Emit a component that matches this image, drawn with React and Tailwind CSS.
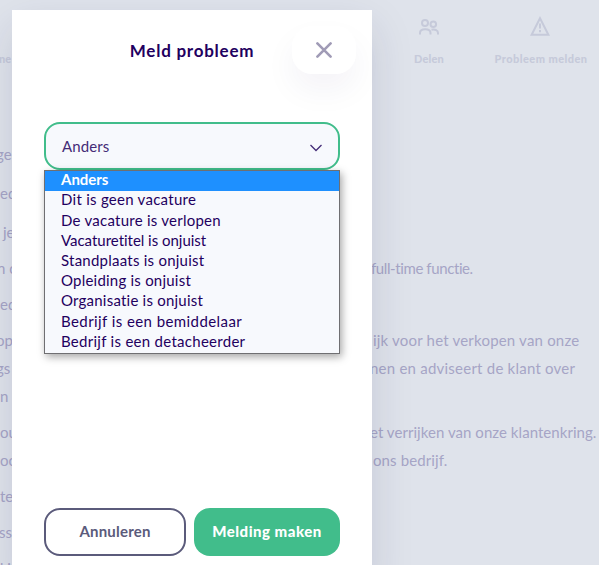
import { clsx } from "clsx";

const options = [
  { label: "Anders", tracking: "font-bold tracking-[-0.02px]" },
  { label: "Dit is geen vacature", tracking: "tracking-[0.27px]" },
  { label: "De vacature is verlopen", tracking: "tracking-[0.25px]" },
  { label: "Vacaturetitel is onjuist", tracking: "tracking-[-0.02px]" },
  { label: "Standplaats is onjuist", tracking: "tracking-[0.24px]" },
  { label: "Opleiding is onjuist", tracking: "tracking-[0.22px]" },
  { label: "Organisatie is onjuist", tracking: "tracking-[0.22px]" },
  { label: "Bedrijf is een bemiddelaar", tracking: "tracking-[0.42px]" },
  { label: "Bedrijf is een detacheerder", tracking: "tracking-[0.28px]" },
];

const lines = [
  { left: "ge", shift: "-ml-[4px]", gap: "mb-[11px]" },
  { left: "ed", shift: "ml-0", gap: "mb-[11px]" },
  { left: "je", shift: "ml-[3px]", gap: "mb-2" },
  { left: "n o", shift: "-ml-[3px]", right: "full-time functie.", rightShift: "-ml-px", tracking: "tracking-[-0.4px]", gap: "mb-2" },
  { left: "ed", shift: "ml-0", gap: "mb-2" },
  { left: "op", shift: "-ml-[4px]", right: "ijk voor het verkopen van onze", rightShift: "ml-px", tracking: "tracking-[0.2px]" },
  { left: "gs", shift: "-ml-[4px]", right: "nen en adviseert de klant over", rightShift: "-ml-[2px]", tracking: "tracking-[0.23px]" },
  { left: "en", shift: "-ml-[8px]", gap: "mb-2" },
  { left: "ou", shift: "", right: "et verrijken van onze klantenkring.", rightShift: "-ml-[2px]", tracking: "tracking-[0.05px]" },
  { left: "oo", shift: "", right: "ons bedrijf.", rightShift: "ml-px", tracking: "tracking-[0.12px]", gap: "mb-2" },
  { left: "te", shift: "", gap: "mb-2" },
  { left: "ss", shift: "-ml-px", gap: "mb-2" },
  { left: "d i", shift: "-ml-[5px]" },
];

function ShareIcon() {
  return (
    <svg width="20" height="16" viewBox="0 0 20 16" fill="none" stroke="currentColor" strokeWidth="2" className="block">
      <circle cx="6" cy="4" r="3" />
      <circle cx="14.3" cy="5.2" r="2.8" />
      <path d="M1 15.500v-1.600C1 11.500 3 10.300 6.200 10.300s5.300 1.200 5.300 3.600v1.600M12.500 10.700c3.800-.8 6.500.6 6.500 3.300v1.500" />
    </svg>
  );
}

function WarningIcon() {
  return (
    <svg width="20" height="20" viewBox="0 0 20 20" fill="none" stroke="currentColor" className="block">
      <path d="M10 2.200 18.400 18.800H1.600Z" strokeWidth="2" />
      <path d="M10 7.500v5M10 14v2.200" strokeWidth="2" />
    </svg>
  );
}

function PageBehind() {
  return (
    <div className="flex h-full flex-col text-[#a6a5c6]">
      <div className="flex h-[140px] shrink-0 items-start text-[11px] leading-[14px] font-black text-[#c6cada]">
        <span className="mt-[52px] w-3 overflow-hidden whitespace-nowrap">
          <span className="-ml-px">ne</span>
        </span>
        <div className="mt-4 ml-[377px] flex w-20 flex-col items-center">
          <div className="flex h-5 items-center pt-0.5"><ShareIcon /></div>
          <span className="mt-4 tracking-[0.2px]">Delen</span>
        </div>
        <div className="mt-4 ml-[15px] flex w-[112px] flex-col items-center whitespace-nowrap">
          <WarningIcon />
          <span className="mt-4 ml-0.5 tracking-[0.45px]">Probleem melden</span>
        </div>
      </div>
      {lines.map((line, index) => (
        <div key={index} className={clsx("flex h-7 shrink-0 text-[15px] leading-7 whitespace-nowrap", line.gap)}>
          <span className="w-3 shrink-0 overflow-hidden">
            <span className={line.shift}>{line.left}</span>
          </span>
          <span className={clsx("ml-[360px] w-[227px] shrink-0 overflow-hidden", line.tracking)}>
            <span className={line.rightShift}>{line.right}</span>
          </span>
        </div>
      ))}
    </div>
  );
}

function ReportDialog() {
  return (
    <section className="absolute top-[10px] left-3 flex h-[570px] w-[360px] flex-col bg-white px-8 text-[#1f0060] shadow-[0_16px_40px_rgba(31,30,80,0.13)]">
      <header className="-mr-4 flex h-16 items-end pt-3">
        <div className="w-[64px]" />
        <h1 className="flex h-[50px] w-[168px] items-center justify-center pt-1 text-[17px] font-bold tracking-[0.75px] whitespace-nowrap">
          Meld probleem
        </h1>
        <button className="ml-4 flex h-12 w-16 items-center justify-center rounded-[20px] bg-white text-[#a09bb6] shadow-[0_16px_32px_rgba(31,20,90,0.05)]">
          <svg width="16" height="16" viewBox="0 0 16 16" fill="none" stroke="currentColor" strokeWidth="2.600" strokeLinecap="round">
            <path d="m1.400 1.400 13.200 13.200M14.600 1.400 1.400 14.600" />
          </svg>
        </button>
      </header>
      <div className="relative mt-12">
        <button className="flex h-12 w-full items-center justify-between rounded-2xl border-2 border-[#41bd8b] bg-[#f7f9fd] pr-4 pl-4 text-[15px] text-[#442c77]">
          <span className="tracking-[0.1px]">Anders</span>
          <svg width="12" height="8" viewBox="0 0 12 8" fill="none" stroke="currentColor" strokeWidth="1.300" className="mt-1">
            <path d="m.5 1 5.500 5.500L11.500 1" />
          </svg>
        </button>
        <ul className="absolute top-12 left-0 grid h-[184px] w-full grid-rows-9 border border-[#6f6f72] bg-[#f7f9fd] text-[15px] shadow-[2px_3px_8px_rgba(0,0,0,0.35)]">
          {options.map((option, index) => (
            <li
              key={option.label}
              className={clsx("flex items-center pb-[3px] pl-4 leading-[17px] whitespace-nowrap", option.tracking, index === 0 && "bg-[#1e90ff] text-white")}
            >
              {option.label}
            </li>
          ))}
        </ul>
      </div>
      <footer className="mt-[338px] flex gap-2 text-[15px] whitespace-nowrap">
        <button className="h-12 w-[142px] shrink-0 rounded-2xl border-2 border-[#5b5b7b] pb-px font-bold tracking-[0.2px] text-[#5b5b7b]">Annuleren</button>
        <button className="h-12 w-[146px] shrink-0 rounded-2xl bg-[#41bd8b] pb-px font-black tracking-[0.5px] text-white">Melding maken</button>
      </footer>
    </section>
  );
}

export default function App() {
  return (
    <main className="relative h-[565px] w-[599px] overflow-hidden bg-[#dfe3eb] font-['Lato',sans-serif]">
      <PageBehind />
      <ReportDialog />
    </main>
  );
}
